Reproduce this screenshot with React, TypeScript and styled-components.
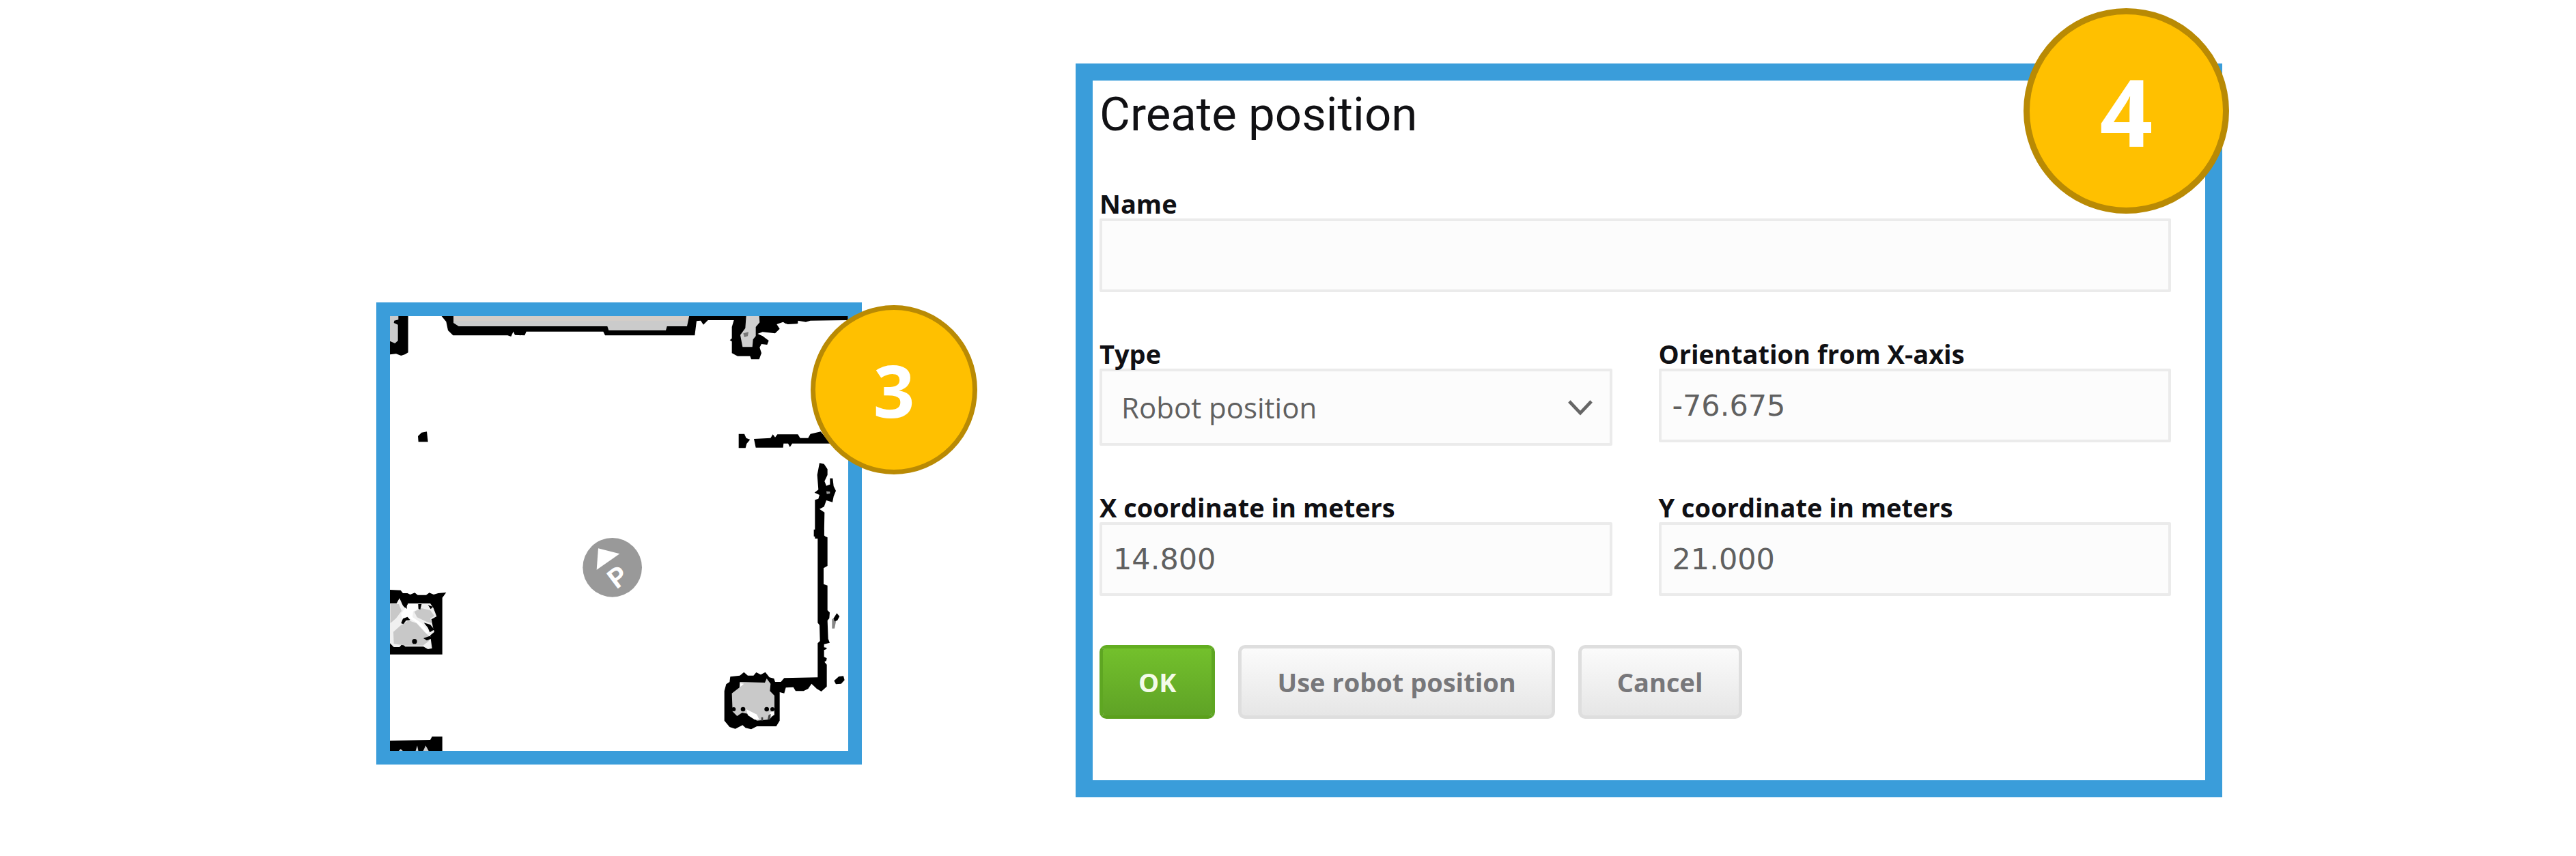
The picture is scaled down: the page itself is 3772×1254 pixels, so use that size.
import React, { useState } from "react";
import styled, { createGlobalStyle, css } from "styled-components";

const GlobalStyle = createGlobalStyle`
  *, *::before, *::after { box-sizing: border-box; }
  body { margin: 0; background: #ffffff; font-family: "Open Sans", "Noto Sans", sans-serif; }
`;

const Page = styled.main`
  display: grid;
  grid-template-columns: 711fr 1679fr;
  column-gap: 313px;
  align-items: end;
  padding: 93px 518px 84px 551px;
`;

const Panel = styled.section`
  position: relative;
  min-width: 0;
  background: #ffffff;
`;

const MapPanel = styled(Panel)`
  border: 20px solid #3a9dda;
  margin-bottom: 48px;
`;

const FormPanel = styled(Panel)`
  border: 25px solid #3a9dda;
  padding: 10px 50px 90px 10px;
`;

const Badge = styled.div<{ $large?: boolean }>`
  position: absolute;
  display: flex;
  align-items: center;
  justify-content: center;
  border-style: solid;
  border-color: #b98a04;
  border-radius: 50%;
  background: #ffc000;
  color: #ffffff;
  font-weight: 700;
  line-height: 1;
  ${(p) =>
    p.$large
      ? css`
          top: -106px;
          right: -35px;
          width: 301px;
          height: 301px;
          border-width: 9px;
          font-size: 136px;
        `
      : css`
          top: -16px;
          right: -189px;
          width: 244px;
          height: 248px;
          border-width: 7px;
          font-size: 106px;
        `}
`;

const MapDrawing = styled.svg`
  display: block;
  width: 100%;
  height: auto;
`;

const Form = styled.form`
  display: flex;
  flex-direction: column;
  gap: 68px;
`;

const Title = styled.h1`
  margin: 0;
  color: #111114;
  font: 400 69px/80px Roboto, sans-serif;
`;

const FieldRow = styled.div`
  display: grid;
  grid-template-columns: 1fr 1fr;
  align-items: start;
  column-gap: 68px;
`;

const FieldBox = styled.div`
  display: flex;
  flex-direction: column;
  min-width: 0;
`;

const Label = styled.label`
  position: relative;
  z-index: 1;
  color: #101014;
  font-size: 38px;
  font-weight: 700;
  line-height: 44px;
`;

const control = css`
  display: block;
  width: 100%;
  margin: 0;
  border: 4px solid #ebebeb;
  border-radius: 2px;
  outline: none;
  background: #fcfcfc;
  color: #606060;
`;

const TextInput = styled.input`
  ${control}
  height: 108px;
  padding: 0 16px;
  font: 400 43px "DejaVu Sans", sans-serif;
`;

const SelectWrap = styled.div`
  position: relative;
`;

const Select = styled.select`
  ${control}
  height: 113px;
  padding: 0 80px 0 28px;
  appearance: none;
  font: 400 42px "Open Sans", sans-serif;
`;

const Chevron = styled.svg`
  position: absolute;
  top: 45px;
  right: 28px;
  width: 38px;
  height: 25px;
  pointer-events: none;
`;

const Actions = styled.div`
  display: flex;
  gap: 34px;
  padding-top: 4px;
`;

const Button = styled.button<{ $primary?: boolean }>`
  height: 108px;
  padding: 0 52px;
  border: 5px solid #dedede;
  border-radius: 10px;
  background: linear-gradient(#fbfbfb, #e6e6e6);
  color: #77777a;
  font: 700 38px "Open Sans", sans-serif;
  ${(p) =>
    p.$primary &&
    css`
      border-color: #62ad20 #5ea622 #5aa01c;
      background: linear-gradient(#73c02c, #5fa326);
      background-clip: padding-box;
      background-color: #5ea622;
      color: #f4fbe9;
    `}
`;

function OccupancyMap() {
  return (
    <MapDrawing viewBox="0 0 671 637" role="img" aria-label="Map">
      {/* upper left: wall end, long shelf, single obstacle */}
      <g transform="translate(-41 -34) scale(.33333)">
        <path fill="#cbcbcb" d="M123 100H162V222H123Z" />
        <path d="M160 100H203V262L190 270L172 276L150 268L123 271V212L145 222L158 210V140L140 132L142 122L160 118Z" />
        <path fill="#cbcbcb" d="M398 100H1440V170H400Z" />
        <path fill="#d3cdc8" d="M402 100H1435V123H402Z" />
        <path fillRule="evenodd" d="M348 100H402V132L425 147H1078L1084 165H1335L1340 147H1428L1438 100H2135V120L1970 122L1950 128L1915 122V135L1870 138L1840 120H1520L1500 140L1488 122L1470 124L1462 187H1068L1060 170H722L715 187L672 185L665 170L655 192L640 187H400L378 165L370 127Z" />
        <path d="M262 614L285 610L290 655H248L246 630Z" />
      </g>

      {/* upper right: alcove, dashed wall and start of the side wall */}
      <g transform="translate(409 -34) scale(.33333)">
        <path d="M290 100L275 150V200L266 208L275 214V265L300 278H355L360 292H395L405 265L397 240L405 225L430 228L437 210L410 190L388 180L410 172L465 178L485 158L472 138L500 128L512 136H560L575 100Z" />
        <path fill="#cfcfcf" d="M338 100H395L397 130L380 150V190L368 205L365 238H322L312 185L334 155Z" />
        <path fill="#777777" d="M325 178L348 172L345 190L330 195Z" />
        <path d="M305 620L330 620L338 638L355 645L340 663L335 682H305Z" />
        <path d="M372 642L445 638L455 622L465 635L475 622H565L575 638H610L620 620L665 610L710 662H540L530 678L522 662H502L500 680H380Z" />
        <path d="M660 748L680 752L695 775V800L682 828L690 848L706 842V815H718L722 850L732 870L722 895L717 920L690 912L680 940L660 950L682 965L680 1065L692 1080H640V910L655 905L660 888L638 878L655 865L650 800Z" />
        <path fill="#999999" d="M690 872L706 874V882L692 884Z" />
      </g>

      {/* lower left: furniture block and wall stub */}
      <g transform="translate(-41 316) scale(.33333)">
        <path d="M123 255L170 257L180 270H200L212 276L232 268L245 278H282L296 268L315 276L335 270L370 267L353 290V539H123Z" />
        <path fill="#f0f0f0" d="M123 315H152L165 292L180 325L195 340L202 315H300L314 335L328 372L305 385L312 420L318 440L300 455L308 512L290 516L270 505H190L178 492L165 507H140L123 490Z" />
        <path fill="#c8c8c8" d="M125 318H162L174 348L150 380L125 402ZM230 352L258 335L300 345L318 370L300 382L308 402L285 396L242 376ZM138 440L170 412L205 390L240 402L275 440L298 462L294 480L268 500H190L140 492Z" />
        <path fill="#ffffff" d="M202 318H245L248 338L225 350L222 375L262 402L295 440L285 448L240 400L210 380L180 402L172 360Z" />
        <path d="M172 402L180 382L200 374L212 388L194 390L182 406ZM272 400L300 408L318 430L298 442L290 422ZM270 468L298 458L310 468L285 478ZM247 318H262L256 342L248 338ZM178 315H197V340ZM290 322L312 330L302 340Z" />
        <circle cx="231" cy="482" r="11" />
        <path d="M123 918L300 915L308 900H353V970H123Z" />
        <path fill="#c9c9c9" d="M235 965L243 940L248 965ZM268 965L280 940L294 965ZM160 965L170 955L182 965Z" />
      </g>

      {/* robot position marker */}
      <g transform="translate(-41 316) scale(.33333)">
        <circle cx="1100" cy="157" r="130" fill="#999999" />
        <path fill="#ffffff" d="M1038 73L1132 97L1031 167Z" />
        <text
          transform="translate(1118 254) rotate(-37)"
          fill="#ffffff"
          fontFamily="Roboto, sans-serif"
          fontWeight="700"
          fontSize="118"
        >
          P
        </text>
      </g>

      {/* lower right: side wall and pillar */}
      <g transform="translate(409 316) scale(.33333)">
        <path d="M635 -10H680V18L695 25V150L678 160V230L695 236V345L705 355L703 380L695 390L698 470L705 488L680 494V508L692 510L690 516L680 520V550L692 556L690 566L682 572L692 584V680L668 702L648 690L625 668L610 690L590 700H555L545 683L512 685L505 710L485 705V830L470 855H385L360 868L335 862L322 850L290 866L265 858L242 830V700L250 670L265 660L268 637L310 632L328 617L345 632H370L382 618L402 628L422 617L440 640L460 645L465 660H490L505 643L652 640V490L662 480L660 410L652 400V25L635 20Z" />
        <path fill="#c9c9c9" d="M310 660L420 663L428 645L445 668L442 700L462 720V800L440 825L385 830L345 800L320 795L298 810L278 790L275 710L308 685Z" />
        <path fill="#ffffff" d="M338 780L385 803L395 825L375 826L345 806ZM440 795L458 790L462 805L448 812ZM310 665L328 668L312 682Z" />
        <circle cx="324" cy="780" r="10" />
        <circle cx="428" cy="780" r="10" />
        <circle cx="283" cy="780" r="9" />
        <circle cx="453" cy="780" r="9" />
        <path fill="#444444" d="M436 806L446 800L442 825H432ZM404 815H412V830H404Z" />
        <path fill="#888888" d="M715 425V385L728 375L732 395L726 425Z" />
        <path d="M722 380L736 358L748 372L738 390L726 394Z" />
        <path d="M724 655L745 636L765 634L770 652L755 668L732 670Z" />
      </g>
    </MapDrawing>
  );
}

type FieldProps = { id: string; label: string; initial: string };

function Field({ id, label, initial }: FieldProps) {
  const [value, setValue] = useState(initial);
  return (
    <FieldBox>
      <Label htmlFor={id}>{label}</Label>
      <TextInput id={id} type="text" value={value} onChange={(e) => setValue(e.target.value)} />
    </FieldBox>
  );
}

export default function App() {
  return (
    <>
      <GlobalStyle />
      <Page>
        <MapPanel>
          <OccupancyMap />
          <Badge>3</Badge>
        </MapPanel>
        <FormPanel>
          <Form onSubmit={(e) => e.preventDefault()}>
            <Title>Create position</Title>
            <Field id="name" label="Name" initial="" />
            <FieldRow>
              <FieldBox>
                <Label htmlFor="type">Type</Label>
                <SelectWrap>
                  <Select id="type" defaultValue="robot">
                    <option value="robot">Robot position</option>
                  </Select>
                  <Chevron viewBox="0 0 40 26" fill="none" stroke="#666666" strokeWidth="5" aria-hidden="true">
                    <path d="M3 3L20 21L37 3" />
                  </Chevron>
                </SelectWrap>
              </FieldBox>
              <Field id="orientation" label="Orientation from X-axis" initial="-76.675" />
            </FieldRow>
            <FieldRow>
              <Field id="x" label="X coordinate in meters" initial="14.800" />
              <Field id="y" label="Y coordinate in meters" initial="21.000" />
            </FieldRow>
            <Actions>
              <Button type="submit" $primary>OK</Button>
              <Button type="button">Use robot position</Button>
              <Button type="button">Cancel</Button>
            </Actions>
          </Form>
          <Badge $large>4</Badge>
        </FormPanel>
      </Page>
    </>
  );
}
